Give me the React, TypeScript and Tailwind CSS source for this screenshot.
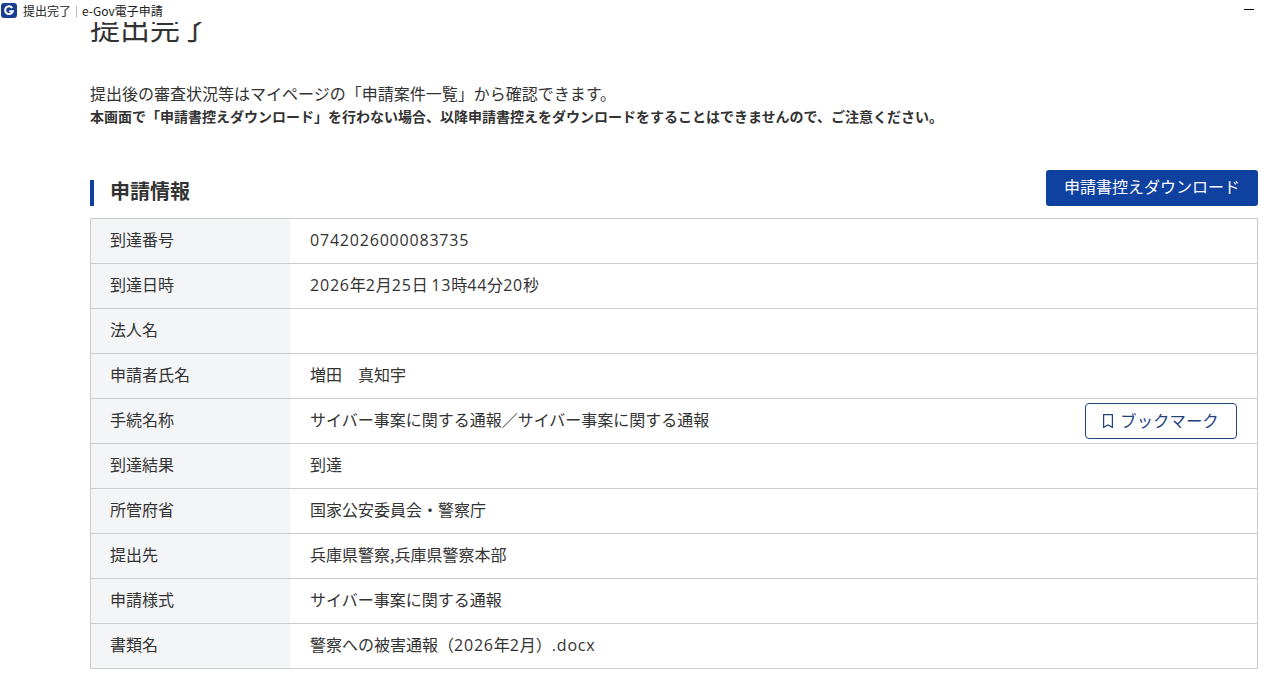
import React from "react";

const rows = [
  { label: "到達番号", value: "0742026000083735" },
  { label: "到達日時", value: "2026年2月25日 13時44分20秒" },
  { label: "法人名", value: "" },
  { label: "申請者氏名", value: "増田　真知宇" },
  { label: "手続名称", value: "サイバー事案に関する通報／サイバー事案に関する通報", bookmark: true },
  { label: "到達結果", value: "到達" },
  { label: "所管府省", value: "国家公安委員会・警察庁" },
  { label: "提出先", value: "兵庫県警察,兵庫県警察本部" },
  { label: "申請様式", value: "サイバー事案に関する通報" },
  { label: "書類名", value: "警察への被害通報（2026年2月）.docx" },
];

// digits and latin are wider in the original font
function Value({ text }: { text: string }) {
  return (
    <span className="mb-[4px]">
      {text.split(/([0-9.a-z]+)/).map((part, i) =>
        i % 2 === 1 ? (
          <span key={i} className="font-['Open_Sans',sans-serif] tracking-[0.8px]">
            {part}
          </span>
        ) : (
          part
        )
      )}
    </span>
  );
}

function App() {
  return (
    <div className="h-[697px] w-[1287px] overflow-hidden bg-white font-['Noto_Sans_CJK_JP','Noto_Sans',sans-serif] text-[#333]">
      <div className="relative z-10 flex h-[22px] items-center bg-white pl-[1px] text-[12px] leading-none text-[#222]">
        <svg width="16" height="15" viewBox="0 0 16 15" className="mr-[6px] mb-[1px]">
          <rect width="16" height="15" rx="3" fill="#1b3f8f" />
          <path d="M11.3 5A3.9 3.9 0 1 0 11.8 8.2H8.2" fill="none" stroke="#fff" strokeWidth="2" />
        </svg>
        <span>提出完了</span>
        <span className="mx-[5px] h-[11px] w-px bg-[#bbb]" />
        <span>e-Gov電子申請</span>
        <span className="mr-[33px] mb-[4px] ml-auto h-px w-[10px] bg-black" />
      </div>
      <div className="px-[90px] pr-[29px]">
        <h1 className="-mt-[16px] h-[40px] text-[30px] leading-[40px]">提出完了</h1>
        <p className="mt-[35px] text-[16px] leading-[24px]">
          提出後の審査状況等はマイページの「申請案件一覧」から確認できます。
        </p>
        <p className="text-[14px] leading-[22px] font-bold">
          本画面で「申請書控えダウンロード」を行わない場合、以降申請書控えをダウンロードをすることはできませんので、ご注意ください。
        </p>
        <div className="mt-[43px] flex items-end justify-between">
          <h2 className="border-l-4 border-[#0f41a0] pb-[4px] pl-[16px] text-[20px] leading-[22px] font-bold">申請情報</h2>
          <button className="flex h-[36px] w-[212px] items-center justify-center rounded-[3px] bg-[#0f41a0] pb-[4px] text-[16px] text-white">
            申請書控えダウンロード
          </button>
        </div>
        <div className="mt-[12px] border-t border-r border-l border-[#ccc]">
          {rows.map((r) => (
            <div key={r.label} className="flex h-[45px] border-b border-[#ccc] text-[16px]">
              <div className="flex w-[199px] items-center bg-[#f4f5f7] pl-[19px]">
                <span className="mb-[4px]">{r.label}</span>
              </div>
              <div className="flex flex-1 items-center justify-between pr-[20px] pl-[20px]">
                <Value text={r.value} />
                {r.bookmark && (
                  <button className="flex h-[36px] w-[152px] items-center justify-center gap-[7px] rounded-[4px] border border-[#23437f] text-[16.4px] text-[#23437f]">
                    <svg width="10" height="14" viewBox="0 0 10 14" fill="none" stroke="#23437f" strokeWidth="1.2">
                      <path d="M.6.6h8.8v12.8L5 11 .6 13.4z" />
                    </svg>
                    <span className="mb-[2px]">ブックマーク</span>
                  </button>
                )}
              </div>
            </div>
          ))}
        </div>
      </div>
    </div>
  );
}

export default App;
